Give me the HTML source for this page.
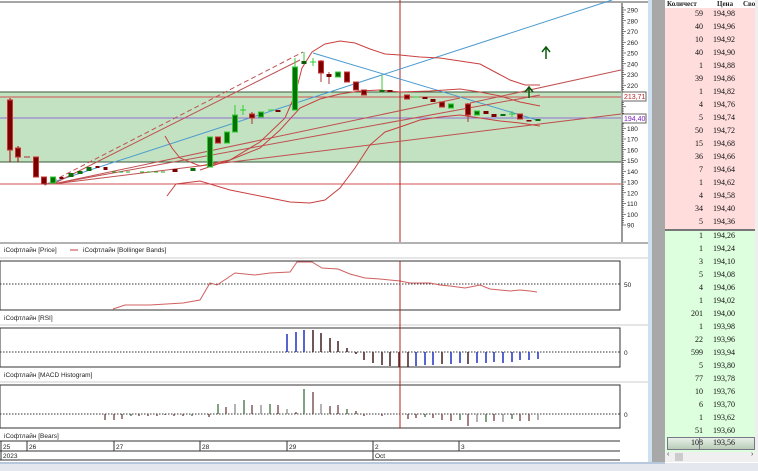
<!DOCTYPE html>
<html><head><meta charset="utf-8"><style>
body{margin:0;width:758px;height:471px;overflow:hidden;background:#fff;font-family:"Liberation Sans",sans-serif;position:relative}
.ob{position:absolute;left:665px;top:0;width:93px;height:463px;background:#fff}
.r{position:absolute;left:0;width:90px;height:13px;font:8px "Liberation Serif",serif;color:#111}
.r .q{position:absolute;right:52px;top:2px}
.r .p{position:absolute;left:48px;top:2px}
.hd{position:absolute;left:0;top:0;width:93px;height:7px;font:bold 7px "Liberation Serif",serif;color:#222}
</style></head><body>
<svg width="665" height="471" style="position:absolute;left:0;top:0" font-family="Liberation Sans, sans-serif">
<rect x="0" y="0" width="665" height="471" fill="#fff"/>
<line x1="0" y1="2" x2="648" y2="2" stroke="#888" stroke-width="1.5"/>
<!-- green band -->
<rect x="0" y="92" width="621" height="70" fill="#c2e2c2"/>
<line x1="0" y1="92" x2="621" y2="92" stroke="#3a5a3a" stroke-width="1"/>
<line x1="0" y1="162" x2="621" y2="162" stroke="#3a5a3a" stroke-width="1"/>
<line x1="0" y1="97" x2="621" y2="97" stroke="#d05050" stroke-width="1"/>
<line x1="0" y1="184" x2="621" y2="184" stroke="#d05050" stroke-width="1"/>
<line x1="0" y1="118" x2="621" y2="118" stroke="#9070d0" stroke-width="1"/>
<line x1="400" y1="0" x2="400" y2="242" stroke="#b02020" stroke-width="1"/>
<!-- trend lines -->
<g fill="none" stroke-width="1">
<line x1="44" y1="185" x2="612" y2="0" stroke="#4a9ad0"/>
<line x1="313" y1="53" x2="537" y2="120" stroke="#4a9ad0"/>
<line x1="45" y1="185" x2="303" y2="52" stroke="#c05050" stroke-dasharray="5,3"/>
<line x1="53" y1="184" x2="621" y2="114" stroke="#c05050"/>
<line x1="53" y1="184" x2="540" y2="95" stroke="#c05050"/>
<line x1="53" y1="184" x2="460" y2="98" stroke="#c05050"/>
<line x1="470" y1="103" x2="621" y2="70" stroke="#c05050"/>
<line x1="53" y1="184" x2="300" y2="60" stroke="#c05050"/>
<polyline stroke="#c84040" points="165,136 172,148 180,158 200,166 230,160 260,142 285,118 295,95 302,68 312,52 325,44 340,41 355,43 370,49 385,54 400,55 420,57 440,58 460,61 480,64 495,72 510,80 525,85 540,85"/>
<polyline stroke="#c84040" points="200,170 230,160 260,148 280,130 300,108 320,99 340,94 360,91 380,90 400,92 430,91 460,89 480,92 500,96 520,102 540,106"/>
<polyline stroke="#c84040" points="167,196 176,184 200,181 230,190 260,196 290,202 310,203 325,200 340,188 355,168 370,145 385,132 400,127 420,120 440,117 460,115 480,118 500,121 520,123 540,126"/>
</g>
<!-- candles -->
<g stroke-width="1">
<line x1="10" y1="98" x2="10" y2="162" stroke="#a00"/><rect x="7.5" y="100" width="5" height="50" fill="#7a0000" stroke="#c33"/>
<line x1="18" y1="146" x2="18" y2="162" stroke="#a00"/><rect x="15.5" y="148" width="5" height="9" fill="#7a0000" stroke="#c33"/>
<line x1="24" y1="157" x2="30" y2="157" stroke="#a33"/>
<rect x="33.5" y="157" width="5" height="20" fill="#7a0000" stroke="#c33"/>
<rect x="41.5" y="177" width="5" height="7" fill="#7a0000" stroke="#c33"/>
<rect x="50.5" y="177" width="5" height="6" fill="#0a6e0a" stroke="#3c3"/>
<rect x="59.5" y="177" width="4" height="2" fill="#7a0000"/>
<rect x="68.5" y="173" width="5" height="4" fill="#0a6e0a"/>
<rect x="77.5" y="171" width="5" height="3" fill="#0a6e0a"/>
<rect x="86.5" y="167" width="5" height="4" fill="#0a6e0a"/>
<rect x="95.5" y="166" width="4" height="2" fill="#7a0000"/>
<rect x="103.5" y="167" width="4" height="3" fill="#7a0000"/>
<line x1="112" y1="172" x2="130" y2="172" stroke="#2a2" stroke-dasharray="4,3"/>
<line x1="140" y1="172" x2="165" y2="172" stroke="#2a2" stroke-dasharray="4,3"/>
<rect x="172.5" y="169" width="5" height="3" fill="#7a0000"/>
<rect x="190.5" y="168" width="5" height="3" fill="#0a6e0a"/>
<rect x="207.5" y="137" width="5" height="30" fill="#0a6e0a" stroke="#3c3"/>
<rect x="215.5" y="137" width="5" height="6" fill="#7a0000" stroke="#c33"/>
<rect x="224.5" y="132" width="5" height="11" fill="#0a6e0a" stroke="#3c3"/>
<line x1="235" y1="105" x2="235" y2="132" stroke="#3c3"/><rect x="232.5" y="115" width="5" height="17" fill="#0a6e0a" stroke="#3c3"/>
<line x1="240" y1="110" x2="246" y2="110" stroke="#3c3"/><line x1="243" y1="105" x2="243" y2="115" stroke="#3c3"/>
<line x1="252" y1="112" x2="252" y2="124" stroke="#a33"/><rect x="249.5" y="114" width="5" height="4" fill="#7a0000" stroke="#c33"/>
<rect x="258.5" y="112" width="5" height="5" fill="#0a6e0a" stroke="#3c3"/>
<line x1="268" y1="110" x2="274" y2="110" stroke="#3c3"/>
<rect x="275.5" y="110" width="5" height="2" fill="#7a0000"/>
<line x1="295" y1="58" x2="295" y2="110" stroke="#3c3"/><rect x="292.5" y="67" width="5" height="43" fill="#0a6e0a" stroke="#3c3"/>
<line x1="304" y1="52" x2="304" y2="64" stroke="#3c3"/><rect x="301.5" y="61" width="5" height="3" fill="#0a5a0a"/>
<line x1="310" y1="62" x2="316" y2="62" stroke="#3c3"/><line x1="313" y1="58" x2="313" y2="66" stroke="#3c3"/>
<line x1="321" y1="60" x2="321" y2="82" stroke="#a33"/><rect x="318.5" y="61" width="5" height="12" fill="#7a0000" stroke="#c33"/>
<line x1="329" y1="72" x2="329" y2="84" stroke="#a33"/><rect x="326.5" y="74" width="5" height="3" fill="#7a0000"/>
<rect x="335.5" y="72" width="5" height="5" fill="#0a6e0a" stroke="#3c3"/>
<rect x="344.5" y="72" width="5" height="10" fill="#7a0000" stroke="#c33"/>
<rect x="353.5" y="82" width="5" height="8" fill="#7a0000" stroke="#c33"/>
<rect x="361.5" y="90" width="5" height="5" fill="#7a0000" stroke="#c33"/>
<line x1="382" y1="75" x2="382" y2="92" stroke="#3c3"/><rect x="379.5" y="90" width="5" height="2" fill="#0a6e0a"/>
<rect x="387.5" y="90" width="5" height="2" fill="#7a0000"/>
<rect x="404.5" y="95" width="5" height="4" fill="#7a0000" stroke="#c33"/>
<line x1="413" y1="97" x2="419" y2="97" stroke="#3c3"/>
<rect x="422.5" y="97" width="5" height="2" fill="#7a0000"/>
<rect x="430.5" y="99" width="5" height="3" fill="#7a0000"/>
<rect x="439.5" y="102" width="5" height="5" fill="#7a0000" stroke="#c33"/>
<rect x="448.5" y="104" width="5" height="4" fill="#0a6e0a" stroke="#3c3"/>
<line x1="468" y1="103" x2="468" y2="122" stroke="#a33"/><rect x="465.5" y="104" width="5" height="11" fill="#7a0000" stroke="#c33"/>
<rect x="474.5" y="111" width="5" height="4" fill="#0a6e0a" stroke="#3c3"/>
<rect x="483.5" y="111" width="5" height="3" fill="#7a0000"/>
<rect x="491.5" y="114" width="5" height="3" fill="#7a0000"/>
<rect x="500.5" y="114" width="5" height="2" fill="#0a6e0a"/>
<line x1="509" y1="114" x2="515" y2="114" stroke="#3c3"/><line x1="512" y1="111" x2="512" y2="117" stroke="#3c3"/>
<rect x="517.5" y="114" width="5" height="5" fill="#7a0000" stroke="#c33"/>
<rect x="526.5" y="120" width="5" height="1.5" fill="#7a0000"/>
<rect x="535.5" y="119" width="5" height="2" fill="#0a6e0a"/>
</g>
<!-- arrows -->
<g stroke="#0a5a0a" stroke-width="1.5" fill="none"><line x1="546" y1="59" x2="546" y2="48"/><polyline points="542,52 546,47 550,52"/>
<line x1="529" y1="98" x2="529" y2="88"/><polyline points="525,92 529,87 533,92"/></g>
<!-- right axis -->
<line x1="622" y1="3" x2="622" y2="242" stroke="#333"/>
<g font-size="6.5" fill="#222" id="ax"></g>
<rect x="622" y="92" width="24" height="9" fill="#fff" stroke="#666"/><text x="624" y="99" font-size="7" fill="#c02020">213,71</text>
<rect x="622" y="114" width="24" height="9" fill="#fff" stroke="#666"/><text x="624" y="121" font-size="7" fill="#8020c0">194,40</text>
<!-- gutter -->
<rect x="648" y="0" width="4" height="463" fill="#cfe0f0"/>
<rect x="652" y="0" width="13" height="463" fill="#a8a8a8"/>
<!-- panel separators/labels -->
<line x1="0" y1="243" x2="648" y2="243" stroke="#666"/>
<text x="4" y="252" font-size="6.5" fill="#222">iСофтлайн [Price]</text>
<line x1="70" y1="250" x2="78" y2="250" stroke="#c04040"/>
<text x="83" y="252" font-size="6.5" fill="#222">iСофтлайн [Bollinger Bands]</text>
<line x1="0" y1="258" x2="648" y2="258" stroke="#ccc"/>
<rect x="0" y="261" width="620" height="49" fill="none" stroke="#333"/>
<line x1="0" y1="284" x2="620" y2="284" stroke="#333" stroke-dasharray="1.5,1.5"/>
<polyline fill="none" stroke="#d06060" points="113,309 125,305 150,305 183,303 200,300 210,283 217,285 235,273 255,275 270,273 290,272 297,262 312,262 322,268 338,269 350,274 365,278 380,279 400,281 410,283 420,283 430,283 440,285 450,286 465,288 480,285 490,289 510,291 520,290 530,291 537,292"/>
<text x="4" y="320" font-size="6.5" fill="#222">iСофтлайн [RSI]</text>
<line x1="0" y1="325" x2="648" y2="325" stroke="#ccc"/>
<rect x="0" y="328" width="620" height="39" fill="none" stroke="#333"/>
<line x1="0" y1="352" x2="620" y2="352" stroke="#333" stroke-dasharray="1.5,1.5"/>
<g id="macd" stroke-width="1.5"></g>
<text x="4" y="377" font-size="6.5" fill="#222">iСофтлайн [MACD Histogram]</text>
<line x1="0" y1="382" x2="648" y2="382" stroke="#ccc"/>
<rect x="0" y="385" width="620" height="43" fill="none" stroke="#333"/>
<line x1="0" y1="414" x2="620" y2="414" stroke="#333" stroke-dasharray="1.5,1.5"/>
<g id="bears" stroke-width="1.2"></g>
<line x1="400" y1="261" x2="400" y2="428" stroke="#b02020"/>
<text x="4" y="438" font-size="6.5" fill="#222">iСофтлайн [Bears]</text>
<!-- date axis -->
<line x1="0" y1="441" x2="620" y2="441" stroke="#333"/>
<line x1="0" y1="451" x2="620" y2="451" stroke="#333"/>
<line x1="0" y1="460" x2="620" y2="460" stroke="#333"/>
<g font-size="6.5" fill="#222">
<line x1="1" y1="441" x2="1" y2="460" stroke="#333"/><text x="3" y="449">25</text><text x="3" y="458">2023</text>
<line x1="27" y1="441" x2="27" y2="451" stroke="#333"/><text x="29" y="449">26</text>
<line x1="114" y1="441" x2="114" y2="451" stroke="#333"/><text x="116" y="449">27</text>
<line x1="200" y1="441" x2="200" y2="451" stroke="#333"/><text x="202" y="449">28</text>
<line x1="287" y1="441" x2="287" y2="451" stroke="#333"/><text x="289" y="449">29</text>
<line x1="373" y1="441" x2="373" y2="460" stroke="#333"/><text x="375" y="449">2</text><text x="375" y="458">Oct</text>
<line x1="459" y1="441" x2="459" y2="451" stroke="#333"/><text x="461" y="449">3</text>
</g>
<text x="624" y="287" font-size="6.5" fill="#222">50</text>
<text x="624" y="355" font-size="6.5" fill="#222">0</text>
<text x="624" y="417" font-size="6.5" fill="#222">0</text>
<rect x="0" y="463" width="665" height="8" fill="#e4e8ee"/>
<line x1="0" y1="463" x2="665" y2="463" stroke="#b8c8dc" stroke-width="2"/>
</svg>
<div class="ob" id="ob">
<div class="hd"><span style="position:absolute;left:2px">Количест</span><span style="position:absolute;left:52px">Цена</span><span style="position:absolute;left:78px">Сво</span></div>
</div>
<div style="position:absolute;left:665px;top:463px;width:93px;height:8px;background:#e4e8ee"></div>
<script>
var ax=document.getElementById('ax'),s='';
for(var v=90;v<=292;v+=2){var y=10+(290-v)*1.075;var L=(v%10==0)?4:2;s+='<line x1="622" y1="'+y+'" x2="'+(622+L)+'" y2="'+y+'" stroke="#333" stroke-width="0.6"/>';if(v%10==0&&v!=210&&v!=200&&v!=190)s+='<text x="627" y="'+(y+2.5)+'">'+v+'</text>';}
ax.innerHTML=s;
var m=document.getElementById('macd'),h='';
var mv=[[287,-18,'#2030c0'],[296,-20,'#2030c0'],[304,-22,'#2030c0'],[313,-22,'#402020'],[321,-19,'#402020'],[330,-14,'#402020'],[338,-11,'#402020'],[347,-4,'#402020'],[356,2,'#402020'],[364,8,'#402020'],[373,11,'#402020'],[382,13,'#402020'],[390,14,'#402020'],[399,15,'#402020'],[408,15,'#402020'],[416,14,'#2030c0'],[425,13,'#2030c0'],[433,13,'#2030c0'],[442,12,'#402020'],[451,12,'#2030c0'],[460,11,'#2030c0'],[468,12,'#402020'],[477,11,'#2030c0'],[486,11,'#2030c0'],[494,10,'#2030c0'],[503,11,'#2030c0'],[512,10,'#2030c0'],[520,8,'#2030c0'],[529,8,'#2030c0'],[538,7,'#2030c0']];
mv.forEach(function(a){h+='<line x1="'+a[0]+'" y1="352" x2="'+a[0]+'" y2="'+(352+a[1])+'" stroke="'+a[2]+'"/>';});m.innerHTML=h;
var b=document.getElementById('bears');h='';
var bv=[[105,6,'#603030'],[114,6,'#603030'],[122,5,'#603030'],[131,2,'#306030'],[139,2,'#603030'],[148,2,'#603030'],[157,2,'#603030'],[165,1,'#603030'],[174,2,'#603030'],[183,2,'#603030'],[192,2,'#306030'],[209,3,'#603030'],[218,-10,'#306030'],[226,-7,'#603030'],[235,-10,'#808080'],[244,-14,'#306030'],[252,-9,'#603030'],[261,-9,'#808080'],[270,-10,'#306030'],[278,-9,'#603030'],[287,-5,'#808080'],[296,-2,'#603030'],[304,-25,'#306030'],[313,-22,'#603030'],[321,-10,'#808080'],[330,-8,'#603030'],[338,-9,'#603030'],[347,-5,'#306030'],[356,-3,'#603030'],[364,2,'#603030'],[382,2,'#603030'],[408,5,'#603030'],[416,4,'#603030'],[425,3,'#306030'],[433,4,'#603030'],[442,6,'#603030'],[451,7,'#603030'],[460,6,'#306030'],[468,12,'#603030'],[477,8,'#808080'],[486,8,'#306030'],[494,7,'#603030'],[503,8,'#808080'],[512,5,'#306030'],[520,7,'#603030'],[529,7,'#603030'],[538,6,'#808080']];
bv.forEach(function(a){h+='<line x1="'+a[0]+'" y1="414" x2="'+a[0]+'" y2="'+(414+a[1])+'" stroke="'+a[2]+'"/>';});b.innerHTML=h;
var ob=document.getElementById('ob');h='';
var ask=[['59','194,98'],['40','194,96'],['10','194,92'],['40','194,90'],['1','194,88'],['39','194,86'],['1','194,82'],['4','194,76'],['5','194,74'],['50','194,72'],['15','194,68'],['36','194,66'],['7','194,64'],['1','194,62'],['4','194,58'],['34','194,40'],['5','194,36']];
var bid=[['1','194,26'],['1','194,24'],['3','194,10'],['5','194,08'],['4','194,06'],['1','194,02'],['201','194,00'],['1','193,98'],['22','193,96'],['599','193,94'],['5','193,80'],['77','193,78'],['10','193,76'],['6','193,70'],['1','193,62'],['51','193,60']];
h+='<div style="position:absolute;left:0;top:8px;width:90px;height:221px;background:#fdd"></div>';
h+='<div style="position:absolute;left:0;top:229px;width:90px;height:2px;background:#777"></div>';
h+='<div style="position:absolute;left:0;top:231px;width:90px;height:221px;background:#dfd"></div>';
ask.forEach(function(a,i){h+='<div class="r" style="top:'+(7+i*13)+'px"><span class="q">'+a[0]+'</span><span class="p">'+a[1]+'</span></div>';});
bid.forEach(function(a,i){h+='<div class="r" style="top:'+(229+i*13)+'px"><span class="q">'+a[0]+'</span><span class="p">'+a[1]+'</span></div>';});
h+='<div style="position:absolute;left:2px;top:437px;width:86px;height:11px;background:linear-gradient(#e8f0e8,#b8ccb8);border:1px solid #778"></div>';
h+='<div class="r" style="top:436px"><span class="q">108</span><span class="p">193,56</span></div>';
h+='<div style="position:absolute;left:34px;top:437px;width:1px;height:12px;background:#778"></div>';
h+='<div style="position:absolute;left:0;top:452px;width:93px;height:10px;background:#f0f0f0"></div>';
h+='<div style="position:absolute;left:10px;top:453px;width:8px;height:8px;background:#ccc"></div>';
h+='<div style="position:absolute;left:2px;top:451px;font-size:7px;color:#333">&lsaquo;</div><div style="position:absolute;left:86px;top:451px;font-size:7px;color:#333">&rsaquo;</div>';
h+='<div style="position:absolute;left:90px;top:0;width:3px;height:452px;background:#eee"></div>';
ob.innerHTML+=h;
</script>
</body></html>
